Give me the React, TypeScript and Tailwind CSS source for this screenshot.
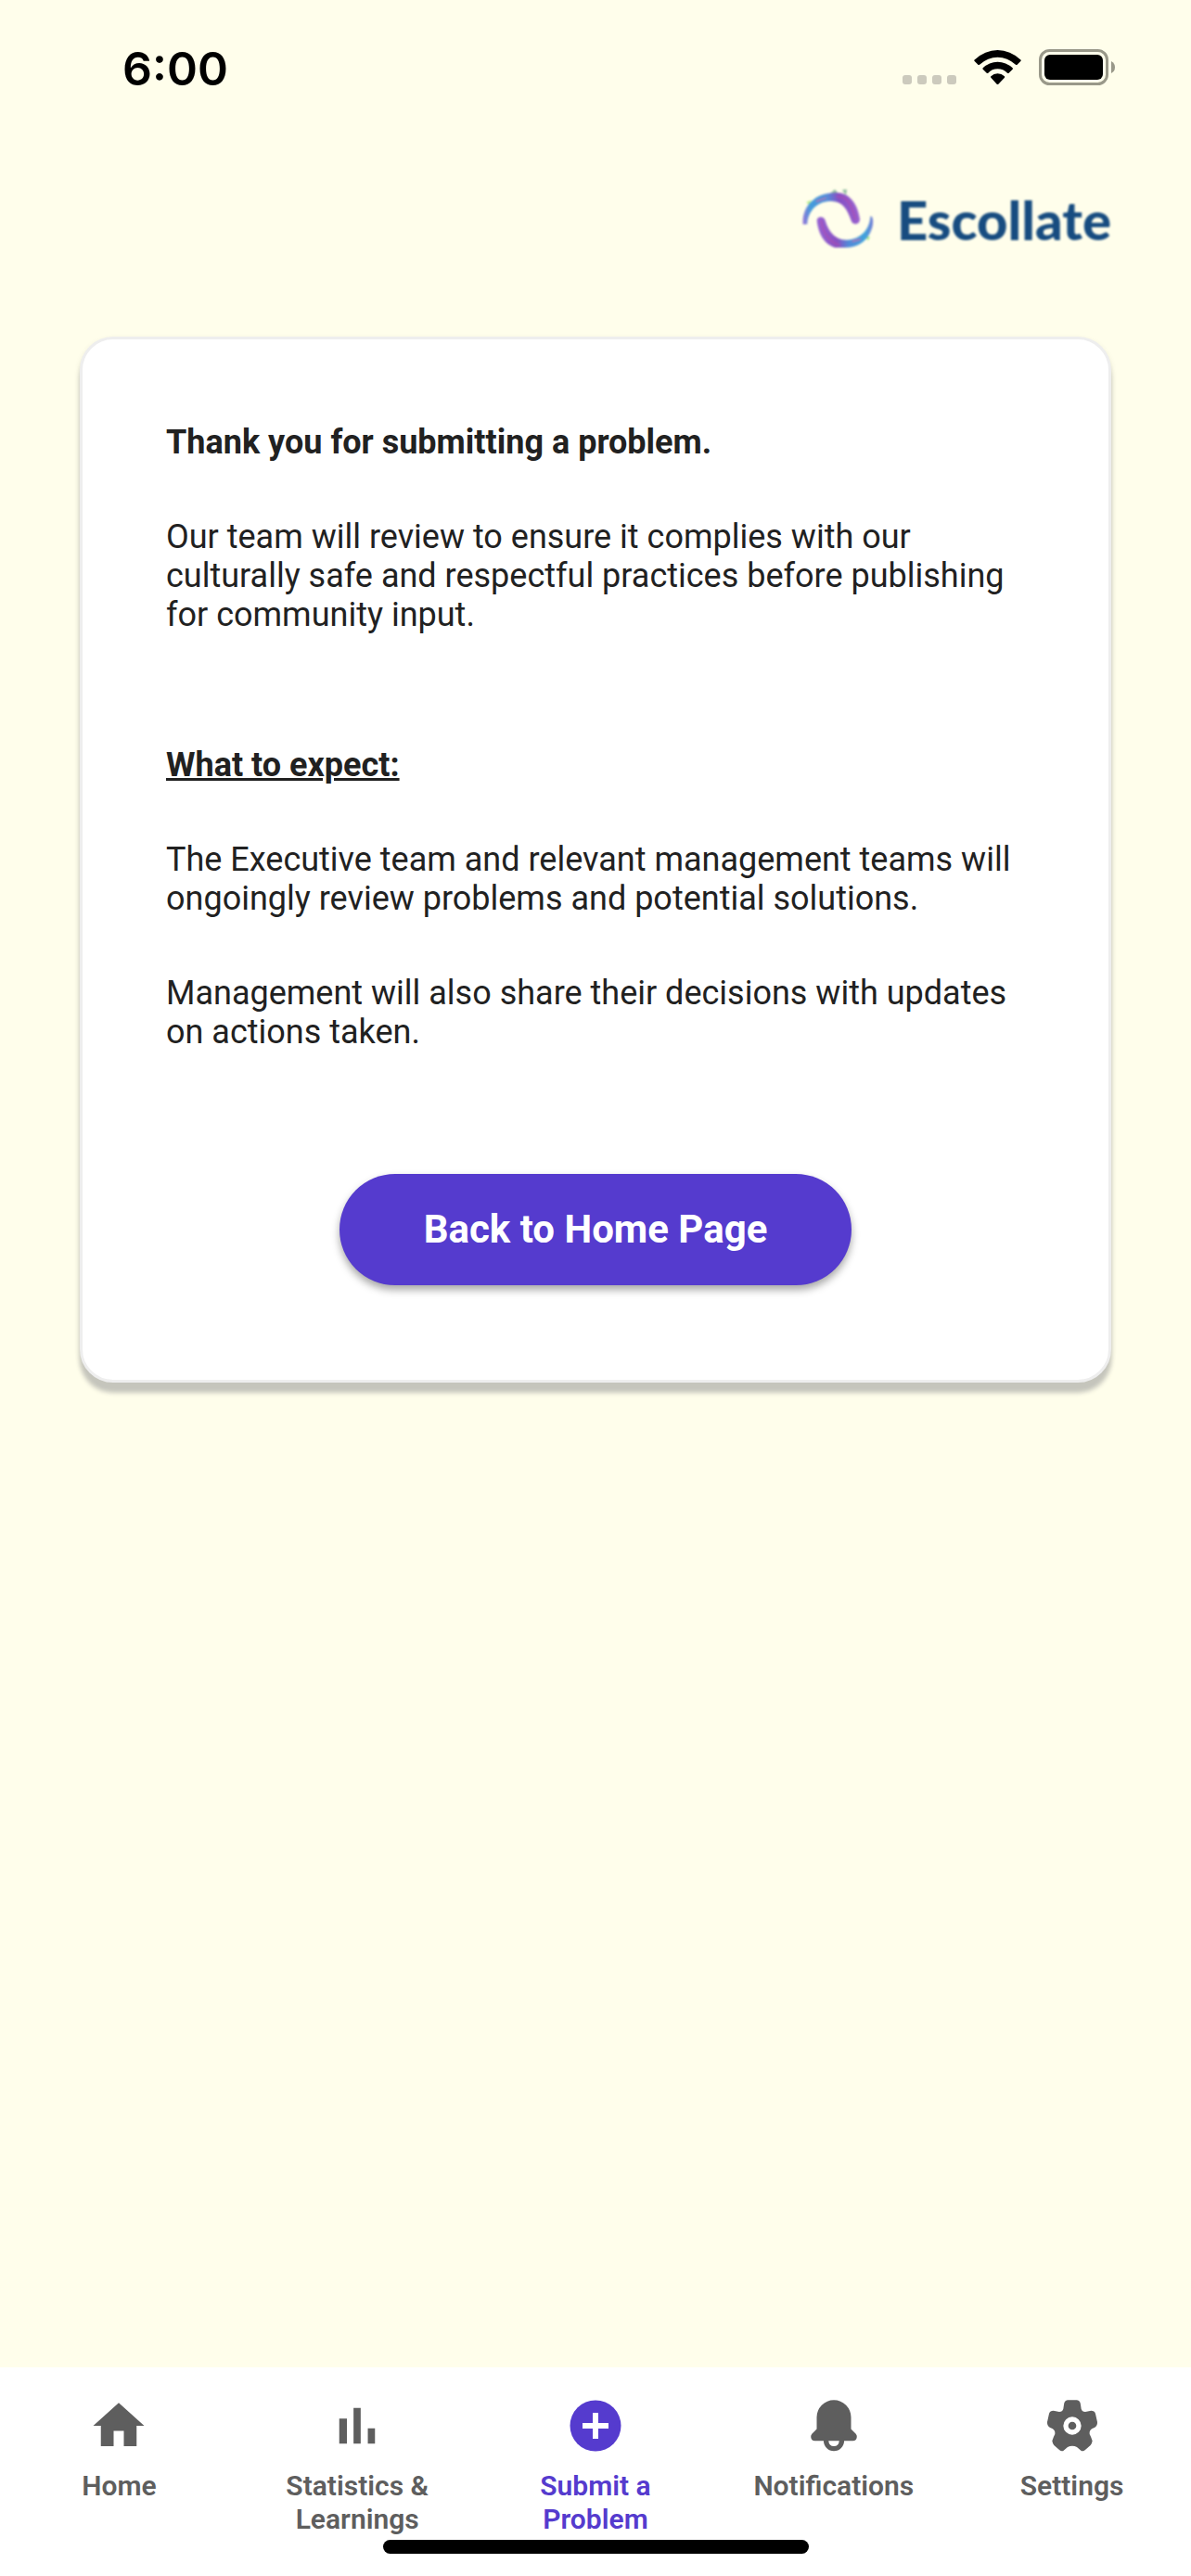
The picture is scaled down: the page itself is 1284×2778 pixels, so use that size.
import type { ReactNode } from "react";

const iconClass = "size-[66px] fill-current";

function StatusBar() {
  return (
    <header className="flex items-start justify-between pt-[43px] pr-[82px] pl-[132px] text-black">
      <time className="font-['Inter',sans-serif] text-[50px] leading-[62px] font-semibold">6:00</time>
      <div className="flex items-start pt-2.5">
        <div className="mt-7 mr-[19px] flex gap-1.5" aria-hidden="true">
          <span className="size-[10px] rounded-[3px] bg-[#cccabd]" />
          <span className="size-[10px] rounded-[3px] bg-[#cccabd]" />
          <span className="size-[10px] rounded-[3px] bg-[#cccabd]" />
          <span className="size-[10px] rounded-[3px] bg-[#cccabd]" />
        </div>
        <svg className="mr-[19px] h-10 w-[51px]" viewBox="0 0 153 120" aria-label="Wi-Fi">
          <path d="M1 35Q36 3 76.500 3T152 35Q153 37 151 39L139 51Q137 52 135 50Q108 26 76.500 26T18 50Q16 52 14 51L2 39Q0 37 1 35Z" />
          <path d="M29 61Q49 41 76.500 41T125 61Q127 63 125 65L112 78Q110 79 108 77Q95 64 76.500 64T46 77Q44 79 42 78L29 65Q27 63 29 61Z" />
          <path d="M55 88Q64 79 76.500 79T99 88Q100 90 99 92L79 113Q76.500 115 74 113L55 92Q53 90 55 88Z" />
        </svg>
        <svg className="h-10 w-[82px]" viewBox="0 0 82 40" aria-label="Battery">
          <rect x="1.500" y="1.500" width="72" height="36" rx="10" fill="none" stroke="#999889" strokeWidth="3" />
          <rect x="6" y="6" width="63" height="27" rx="6" />
          <path d="M78 13Q82 15 82 19.500T78 26Z" fill="#999889" />
        </svg>
      </div>
    </header>
  );
}

function Logo() {
  return (
    <div className="flex items-center justify-end gap-[17px] blur-[1px]">
      <svg className="h-[90px] w-[100px]" viewBox="0 0 300 270" aria-hidden="true">
        <defs>
          <linearGradient id="upper" x1="45" y1="155" x2="230" y2="120" gradientUnits="userSpaceOnUse">
            <stop offset="0" stopColor="#9a72d8" />
            <stop offset="0.2" stopColor="#429cdb" />
            <stop offset="0.5" stopColor="#548ed9" />
            <stop offset="0.7" stopColor="#8550c4" />
            <stop offset="1" stopColor="#9b62cf" />
          </linearGradient>
          <linearGradient id="lower" x1="95" y1="150" x2="275" y2="150" gradientUnits="userSpaceOnUse">
            <stop offset="0" stopColor="#9662d2" />
            <stop offset="0.35" stopColor="#8850c2" />
            <stop offset="0.55" stopColor="#5289d8" />
            <stop offset="0.85" stopColor="#3fa4dc" />
            <stop offset="1" stopColor="#7b79d4" />
          </linearGradient>
        </defs>
        <path d="M58 84L75 77L66 92Z" fill="#b9ef83" />
        <path d="M134 56L150 43L160 53ZM174 44L189 43L186 62Z" fill="#8fbda0" />
        <path d="M249 196L264 196L258 209Z" fill="#a9e88a" />
        <path d="M47 156C42 101 85 54 145 54C194 48 224 87 231 139C231 158 208 160 203 144C190 104 172 78 133 81C91 83 64 113 61 155Z" fill="url(#upper)" />
        <path d="M92 143C93 128 115 128 119 143C130 182 155 208 190 206C234 204 263 172 265 130C275 128 275 151 271 166C258 209 226 231 184 231H150C111 218 96 180 92 143Z" fill="url(#lower)" />
        <path d="M158 66C187 62 205 92 216 138M106 145C111 183 136 218 166 223" fill="none" stroke="#b34bac" strokeWidth="6" strokeLinecap="round" opacity="0.6" />
        <path d="M92 81L120 71M208 211L232 205" fill="none" stroke="#a579bd" strokeWidth="6" strokeLinecap="round" />
      </svg>
      <span className="pt-1 font-['Lato',sans-serif] text-[58px] leading-[86px] font-black text-[#174c80]">Escollate</span>
    </div>
  );
}

function Tab({ label, active, children }: { label: string; active?: boolean; children: ReactNode }) {
  return (
    <a
      href="#"
      aria-current={active ? "page" : undefined}
      className={
        active
          ? "flex flex-1 flex-col items-center gap-3.5 text-[#553bce]"
          : "flex flex-1 flex-col items-center gap-3.5 text-[#5e5e5e]"
      }
    >
      <svg className={iconClass} viewBox="0 0 66 66" aria-hidden="true">
        {children}
      </svg>
      <span className="max-w-[190px] text-center text-[30px] leading-9 font-semibold">{label}</span>
    </a>
  );
}

function TabBar() {
  return (
    <nav className="mt-auto flex flex-col bg-white pt-[30px] pb-6">
      <div className="flex">
        <Tab label="Home">
          <path transform="scale(2.75)" d="M10 20v-6h4v6h5v-8h3L12 3 2 12h3v8z" />
        </Tab>
        <Tab label="Statistics & Learnings">
          <path transform="scale(2.75)" d="M5 9.200h3V19H5zM10.600 5h2.800v14h-2.800zm5.600 8H19v6h-2.800z" />
        </Tab>
        <Tab label="Submit a Problem" active>
          <circle cx="33" cy="33" r="27.500" />
          <path d="M33 19V47M19 33H47" fill="none" stroke="white" strokeWidth="6" />
        </Tab>
        <Tab label="Notifications">
          <path d="M33 5.300A18.500 18.500 0 0 1 51.500 23.800V36.500L56.500 41.500Q58 43 57.800 45Q57.300 49.300 53.500 49.300H12.500Q8.700 49.300 8.200 45Q8 43 9.500 41.500L14.500 36.500V23.800A18.500 18.500 0 0 1 33 5.300Z" />
          <path d="M21.900 49A11.100 11.300 0 0 0 44.100 49H38.800Q38.300 55 33 55T27.200 49Z" />
        </Tab>
        <Tab label="Settings">
          <g transform="scale(0.3333) translate(-38 -39)">
            <path d="M122 55H152Q163 57 164 70L166 83Q169 93 179 93L198 89Q209 89 212 99L218 126Q219 139 207 145Q195 149 193 158Q191 166 197 173L202 187Q201 195 196 201L178 217Q172 222 166 219L152 207Q145 203 137 203T122 207L108 219Q102 222 96 217L78 201Q73 195 72 187L77 173Q83 166 81 158Q79 149 67 145Q55 139 56 126L62 99Q65 89 76 89L95 93Q105 93 108 83L110 70Q111 57 122 55Z" />
            <circle cx="137" cy="138" r="21" fill="none" stroke="white" strokeWidth="16" />
          </g>
        </Tab>
      </div>
      <div className="mt-1 h-[15px] w-[459px] self-center rounded-full bg-black" />
    </nav>
  );
}

export default function App() {
  return (
    <div className="flex min-h-screen flex-col bg-[#fffeeb] font-['Roboto',sans-serif]">
      <StatusBar />
      <main className="px-[86px] pt-[85px]">
        <Logo />
        <section className="mt-[83px] flex flex-col rounded-[36px] border-3 border-[#eeeeee] bg-white px-[90px] pt-[90px] pb-[102px] text-[36px] leading-[42px] text-[#212121] shadow-[0_11px_5px_#c5c5bc,0_3px_6px_rgba(0,0,0,0.1)]">
          <h1 className="font-bold">Thank you for submitting a problem.</h1>
          <p className="mt-[60px]">
            Our team will review to ensure it complies with our culturally safe and respectful practices before
            publishing for community input.
          </p>
          <h2 className="mt-[120px] font-bold underline">What to expect:</h2>
          <p className="mt-[60px]">
            The Executive team and relevant management teams will ongoingly review problems and potential solutions.
          </p>
          <p className="mt-[60px]">
            Management will also share their decisions with updates on actions taken.
          </p>
          <button
            type="button"
            className="mt-[132px] self-center rounded-full bg-[#553bce] px-[91px] py-[35px] text-[42px] leading-[50px] font-bold text-white shadow-[0_5px_9px_rgba(0,0,0,0.35)]"
          >
            Back to Home Page
          </button>
        </section>
      </main>
      <TabBar />
    </div>
  );
}
